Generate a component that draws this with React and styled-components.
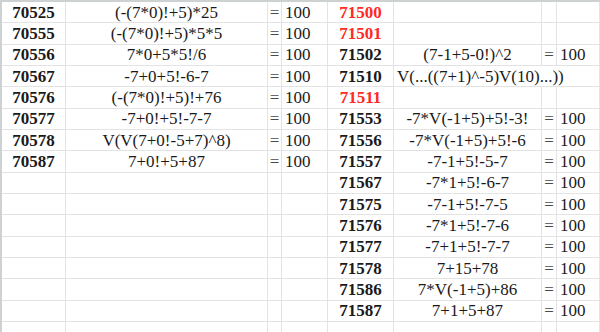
import styled, { createGlobalStyle } from "styled-components";

const GlobalStyle = createGlobalStyle`
  html, body {
    margin: 0;
    padding: 0;
    background: #fff;
  }
  body {
    width: 600px;
    height: 332px;
    overflow: hidden;
  }
`;

const Sheet = styled.div`
  display: grid;
  grid-template-columns: 64px 202px 14px 46px 66px 148px 15px 43px;
  grid-auto-rows: 21.35px;
  width: 598px;
  height: 330px;
  overflow: hidden;
  border-top: 2px solid #cdd1d1;
  border-left: 2px solid #cdd1d1;
  font-family: "Liberation Serif", "Times New Roman", serif;
  font-size: 17px;
  color: #1a1a1a;
`;

const Cell = styled.div`
  grid-column: span ${(p) => p.$span || 1};
  display: flex;
  align-items: center;
  justify-content: ${(p) =>
    p.$align === "left" ? "flex-start" : p.$align === "right" ? "flex-end" : "center"};
  padding: 0 ${(p) => (p.$align === "left" ? "3px" : "0")};
  box-sizing: border-box;
  border-right: 1px solid #e3e3e3;
  border-bottom: 1px solid #e3e3e3;
  white-space: nowrap;
  overflow: visible;
  line-height: 1;
  font-weight: ${(p) => (p.$bold ? 700 : 400)};
  color: ${(p) => (p.$red ? "#ff2a1f" : p.$muted ? "#4a4a4a" : "inherit")};
`;

const left = [
  ["70525", "(-(7*0)!+5)*25"],
  ["70555", "(-(7*0)!+5)*5*5"],
  ["70556", "7*0+5*5!/6"],
  ["70567", "-7+0+5!-6-7"],
  ["70576", "(-(7*0)!+5)!+76"],
  ["70577", "-7+0!+5!-7-7"],
  ["70578", "V(V(7+0!-5+7)^8)"],
  ["70587", "7+0!+5+87"],
];

const right = [
  { id: "71500", red: true },
  { id: "71501", red: true },
  { id: "71502", expr: "(7-1+5-0!)^2" },
  { id: "71510", expr: "V(...((7+1)^-5)V(10)...))", wide: true },
  { id: "71511", red: true },
  { id: "71553", expr: "-7*V(-1+5)+5!-3!" },
  { id: "71556", expr: "-7*V(-1+5)+5!-6" },
  { id: "71557", expr: "-7-1+5!-5-7" },
  { id: "71567", expr: "-7*1+5!-6-7" },
  { id: "71575", expr: "-7-1+5!-7-5" },
  { id: "71576", expr: "-7*1+5!-7-6" },
  { id: "71577", expr: "-7+1+5!-7-7" },
  { id: "71578", expr: "7+15+78" },
  { id: "71586", expr: "7*V(-1+5)+86" },
  { id: "71587", expr: "7+1+5+87" },
];

function EmptyCells() {
  return (
    <>
      <Cell />
      <Cell />
      <Cell />
      <Cell />
    </>
  );
}

function LeftPart({ row }) {
  if (!row) return <EmptyCells />;
  return (
    <>
      <Cell $bold>{row[0]}</Cell>
      <Cell>{row[1]}</Cell>
      <Cell $muted>=</Cell>
      <Cell $align="left">100</Cell>
    </>
  );
}

function RightPart({ row }) {
  if (!row) return <EmptyCells />;
  if (row.wide) {
    return (
      <>
        <Cell $bold>{row.id}</Cell>
        <Cell $span={3} $align="left">
          {row.expr}
        </Cell>
      </>
    );
  }
  return (
    <>
      <Cell $bold $red={row.red}>
        {row.id}
      </Cell>
      <Cell>{row.expr}</Cell>
      <Cell $muted>{row.expr ? "=" : ""}</Cell>
      <Cell $align="left">{row.expr ? "100" : ""}</Cell>
    </>
  );
}

function RowGroup({ i }) {
  return (
    <>
      <LeftPart row={left[i]} />
      <RightPart row={right[i]} />
    </>
  );
}

export default function App() {
  const rows = Array.from({ length: 16 }, (_, i) => i);
  return (
    <>
      <GlobalStyle />
      <Sheet>
        {rows.map((i) => (
          <RowGroup key={i} i={i} />
        ))}
      </Sheet>
    </>
  );
}
